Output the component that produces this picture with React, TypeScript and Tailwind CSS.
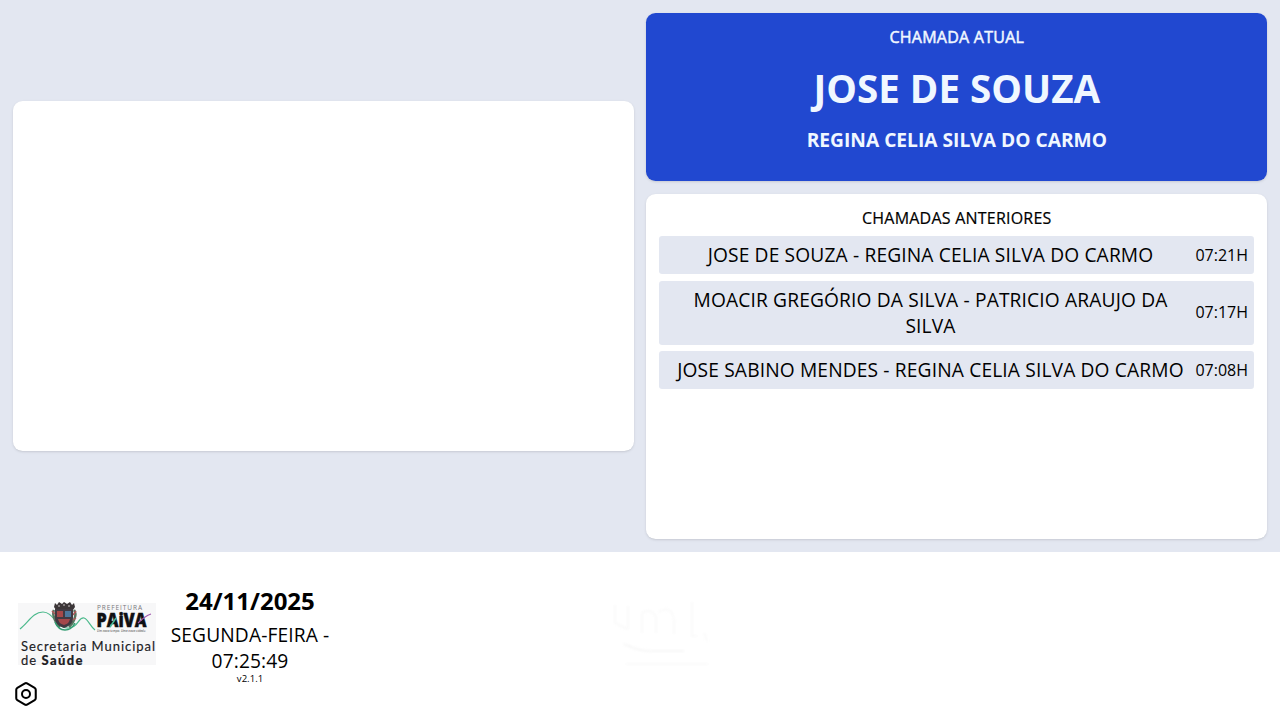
import { Hexagon } from 'lucide-react';

const previousCalls = [
  { id: 1, text: 'JOSE DE SOUZA - REGINA CELIA SILVA DO CARMO', time: '07:21H' },
  { id: 2, text: 'MOACIR GREGÓRIO DA SILVA - PATRICIO ARAUJO DA SILVA', time: '07:17H' },
  { id: 3, text: 'JOSE SABINO MENDES - REGINA CELIA SILVA DO CARMO', time: '07:08H' },
];

function CityLogo() {
  return (
    <svg viewBox="0 0 140 68" className="w-[140px] h-[68px] shrink-0" fontFamily="'Open Sans', sans-serif">
      <rect x="0" y="1" width="138" height="62" fill="#f7f7f8" />
      {/* Hills */}
      <path d="M2 27C10 21 15 10 25 10C36 10 38 27 51 26C61 25 60 15 66 16C70 17 72 24 77 28" fill="none" stroke="#4bb98c" strokeWidth="1.2" />
      {/* Coat of arms */}
      <path d="M36 5l1-4 2 2 2-3 3 2 2-2 3 2 3-2 2 3 2-2 1 4-2 3H38z" fill="#3c3638" />
      <path d="M40 4h2M45 3h2M50 4h2" stroke="#c9c3c4" strokeWidth="1" />
      <path d="M36 8c-2 4 0 7 1 10s2 5 5 7M56 8c3 4 1 7 0 10s-3 5-5 7" fill="none" stroke="#56745f" strokeWidth="2.5" />
      <path d="M34 9l3 3M58 9l-3 4M58 16l-3 2" stroke="#b0575a" strokeWidth="1.5" />
      <path d="M37 7h18v9c0 6-4 8-9 10c-5-2-9-4-9-10z" fill="#413a42" />
      <path d="M39 9h6v6h-6z" fill="#a64949" />
      <path d="M47 9h6v6h-6z" fill="#4c789d" />
      <path d="M40 17h12c-1 4-3 5-6 6c-3-1-5-2-6-6z" fill="#a4484b" />
      <path d="M37 20c2 5 6 8 10 8s8-3 10-7" fill="none" stroke="#339c72" strokeWidth="1.5" />
      <text x="79" y="8" fontSize="6.5" fill="#77777c" textLength="45">PREFEITURA</text>
      <text x="78.5" y="25" fontSize="19.5" fontWeight="800" fill="#101013" stroke="#101013" strokeWidth=".5" textLength="50" lengthAdjust="spacingAndGlyphs">PAiVA</text>
      <path d="M92 25l6-9" stroke="#46b896" strokeWidth="1.5" />
      <path d="M120 21c4-4 7-7 13-9" fill="none" stroke="#a25ab0" strokeWidth="1.2" />
      <text x="79" y="30" fontSize="4" fontStyle="italic" fill="#3d3d40" textLength="49" lengthAdjust="spacingAndGlyphs">Um novo tempo. Uma nova cidade.</text>
      <g fontFamily="Lato, sans-serif" fontSize="13" fill="#202024" stroke="#202024" strokeWidth=".15">
        <text x="3" y="48.5" textLength="134">Secretaria Municipal</text>
        <text x="3" y="63.3" textLength="15">de</text>
        <text x="23.5" y="63.3" fontWeight="900" textLength="41">Saúde</text>
      </g>
    </svg>
  );
}

// Nearly white partner mark in the middle of the footer
function PartnerMark() {
  return (
    <svg viewBox="0 0 100 70" className="w-[100px] h-[70px] blur-[0.8px]" fill="none" stroke="#fafafa" strokeWidth="2">
      <path d="M3 6v18l12 6M16 7v23M30 14v20M30 14c6-4 11-2 14 4v16M47 13c9-6 15 0 15 10v12M80 3v34h5M92 34l3 8" />
      <path d="M12 45c9 4 16 7 26 7h34" stroke="#f7f7f7" />
      <path d="M14 65h82" />
    </svg>
  );
}

export default function App() {
  return (
    <div className="h-screen flex flex-col overflow-hidden bg-white text-black font-['Open_Sans','Noto_Sans',sans-serif]">
      <main className="h-[552px] grid grid-cols-2 gap-[12.8px] p-[12.8px] bg-[#e3e7f1]">
        {/* Media */}
        <section className="flex items-center">
          <div className="w-full aspect-video bg-white rounded-[9.6px] shadow-sm" />
        </section>

        <section className="flex flex-col gap-[12.8px] min-h-0 text-center">
          {/* Current call */}
          <div className="h-[168.7px] p-[12.8px] rounded-[9.6px] bg-[#2148d0] text-[#f0f7ff] shadow-sm">
            <p className="text-base leading-[22.4px] tracking-[0.26px] [-webkit-text-stroke:0.5px]">CHAMADA ATUAL</p>
            <h1 className="mt-[15px] text-[38.6px] leading-[51.2px] font-bold">JOSE DE SOUZA</h1>
            <h2 className="mt-[13px] text-[19.2px] leading-[25.6px] font-bold">REGINA CELIA SILVA DO CARMO</h2>
          </div>

          {/* Previous calls */}
          <div className="flex-1 flex flex-col gap-[6.4px] p-[12.8px] rounded-[9.6px] bg-white shadow-sm">
            <p className="text-base leading-[22.4px] tracking-[0.22px] [-webkit-text-stroke:0.2px]">CHAMADAS ANTERIORES</p>
            {previousCalls.map(call => (
              <div key={call.id} className="flex items-center p-[6.4px] rounded-[3.2px] bg-[#e3e7f1]">
                <p className="flex-1 px-1 text-[19.2px] leading-[25.6px] tracking-[0.14px]">{call.text}</p>
                <span className="text-base leading-[22.4px]">{call.time}</span>
              </div>
            ))}
          </div>
        </section>
      </main>

      <footer className="flex-1 grid grid-cols-[350px_1fr] min-h-0">
        <div className="flex flex-col">
          <div className="flex pl-[18px] pt-[35px] h-[129px]">
            <div className="pt-[15px]">
              <CityLogo />
            </div>
            <div className="w-[184px] text-center">
              <p className="text-2xl leading-[28px] font-bold">24/11/2025</p>
              <p className="mt-[7px] text-[19.2px] leading-[25.6px] tracking-[0.12px]">
                SEGUNDA-FEIRA -
                <br />
                07:25:49
              </p>
              <p className="text-[9.6px] leading-[12px]">v2.1.1</p>
            </div>
          </div>
          <button className="relative size-[26px] ml-[13px]" aria-label="Configurações">
            <Hexagon className="size-[26px]" strokeWidth={1.9} />
            <span className="absolute left-[8px] top-[8px] size-[10px] rounded-full border-2 border-black" />
          </button>
        </div>
        <div className="pl-[262px] pt-[47px]">
          <PartnerMark />
        </div>
      </footer>
    </div>
  );
}
